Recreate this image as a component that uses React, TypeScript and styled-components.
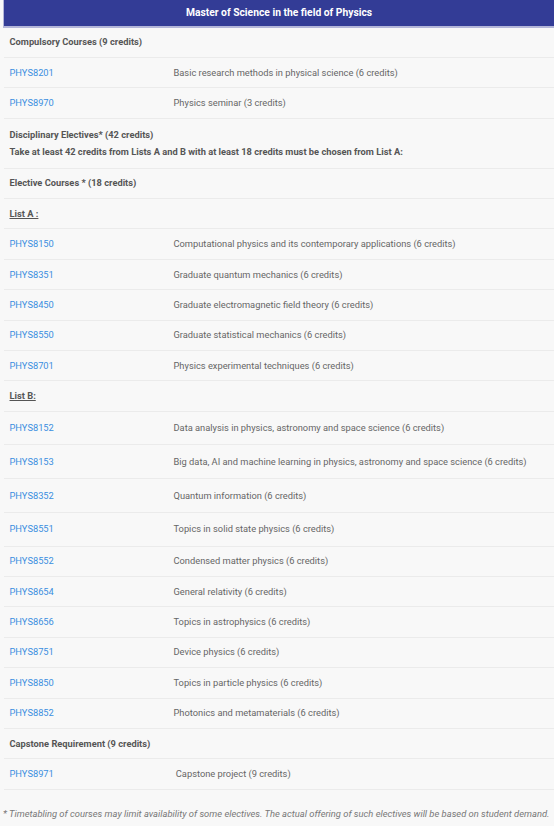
import React from "react";
import styled, { createGlobalStyle } from "styled-components";

const Global = createGlobalStyle`
  html, body { margin: 0; padding: 0; background: #f8f8f8; }
  body { font-family: Roboto, "Liberation Sans", Arial, sans-serif; }
`;

const Page = styled.div`
  width: 554px;
  padding-left: 3px;
  box-sizing: border-box;
`;

const Table = styled.table`
  width: 551px;
  border-collapse: collapse;
  font-size: 9.3px;
  line-height: 14px;
`;

const HeadCell = styled.th`
  background: #333c96;
  color: #ffffff;
  font-weight: 700;
  font-size: 10.3px;
  height: 26px;
  padding: 0;
  text-align: center;
  border-left: 1px solid #b3b6d9;
  border-bottom: 2px solid #b3b6d9;
`;

const Row = styled.tr<{ $h?: number }>`
  height: ${(p) => p.$h ?? 30.4}px;
  border-bottom: 1px solid #ebebeb;
`;

const SectionCell = styled.td`
  padding: 0 6px;
  color: #555;
  font-weight: 700;
  vertical-align: middle;
`;

const ListCell = styled(SectionCell)`
  text-decoration: underline;
`;

const CodeCell = styled.td`
  width: 158px;
  padding: 0 6px;
  color: #3a8ee0;
  vertical-align: middle;
`;

const DescCell = styled.td`
  padding: 0 6px 0 0;
  color: #666;
  vertical-align: middle;
`;

const Line = styled.div`
  line-height: 17px;
`;

const Note = styled.p`
  margin: 18px 0 0 0;
  padding: 0;
  font-size: 9.4px;
  font-style: italic;
  color: #777;
  white-space: nowrap;
`;

type Item = { code: string; desc: string; h?: number };

const listA: Item[] = [
  { code: "PHYS8150", desc: "Computational physics and its contemporary applications (6 credits)" },
  { code: "PHYS8351", desc: "Graduate quantum mechanics (6 credits)" },
  { code: "PHYS8450", desc: "Graduate electromagnetic field theory (6 credits)" },
  { code: "PHYS8550", desc: "Graduate statistical mechanics (6 credits)" },
  { code: "PHYS8701", desc: "Physics experimental techniques (6 credits)" },
];

const listB: Item[] = [
  { code: "PHYS8152", desc: "Data analysis in physics, astronomy and space science (6 credits)", h: 33.7 },
  { code: "PHYS8153", desc: "Big data, AI and machine learning in physics, astronomy and space science (6 credits)", h: 33.7 },
  { code: "PHYS8352", desc: "Quantum information (6 credits)", h: 33.7 },
  { code: "PHYS8551", desc: "Topics in solid state physics (6 credits)", h: 33.7 },
  { code: "PHYS8552", desc: "Condensed matter physics (6 credits)" },
  { code: "PHYS8654", desc: "General relativity (6 credits)" },
  { code: "PHYS8656", desc: "Topics in astrophysics (6 credits)" },
  { code: "PHYS8751", desc: "Device physics (6 credits)" },
  { code: "PHYS8850", desc: "Topics in particle physics (6 credits)" },
  { code: "PHYS8852", desc: "Photonics and metamaterials (6 credits)" },
];

const CourseRow = ({ code, desc, h }: Item) => (
  <Row $h={h}>
    <CodeCell>{code}</CodeCell>
    <DescCell>{desc}</DescCell>
  </Row>
);

export default function App() {
  return (
    <Page>
      <Global />
      <Table>
        <thead>
          <tr>
            <HeadCell colSpan={2}>Master of Science in the field of Physics</HeadCell>
          </tr>
        </thead>
        <tbody>
          <Row>
            <SectionCell colSpan={2}>Compulsory Courses (9 credits)</SectionCell>
          </Row>
          <CourseRow code="PHYS8201" desc="Basic research methods in physical science (6 credits)" />
          <CourseRow code="PHYS8970" desc="Physics seminar (3 credits)" />
          <Row $h={50}>
            <SectionCell colSpan={2}>
              <Line>Disciplinary Electives* (42 credits)</Line>
              <Line>Take at least 42 credits from Lists A and B with at least 18 credits must be chosen from List A:</Line>
            </SectionCell>
          </Row>
          <Row>
            <SectionCell colSpan={2}>Elective Courses * (18 credits)</SectionCell>
          </Row>
          <Row>
            <ListCell colSpan={2}>List A :</ListCell>
          </Row>
          {listA.map((c) => (
            <CourseRow key={c.code} {...c} />
          ))}
          <Row>
            <ListCell colSpan={2}>List B:</ListCell>
          </Row>
          {listB.map((c) => (
            <CourseRow key={c.code} {...c} />
          ))}
          <Row>
            <SectionCell colSpan={2}>Capstone Requirement (9 credits)</SectionCell>
          </Row>
          <CourseRow code="PHYS8971" desc={"\u00a0Capstone project (9 credits)"} />
        </tbody>
      </Table>
      <Note>* Timetabling of courses may limit availability of some electives. The actual offering of such electives will be based on student demand.</Note>
    </Page>
  );
}
